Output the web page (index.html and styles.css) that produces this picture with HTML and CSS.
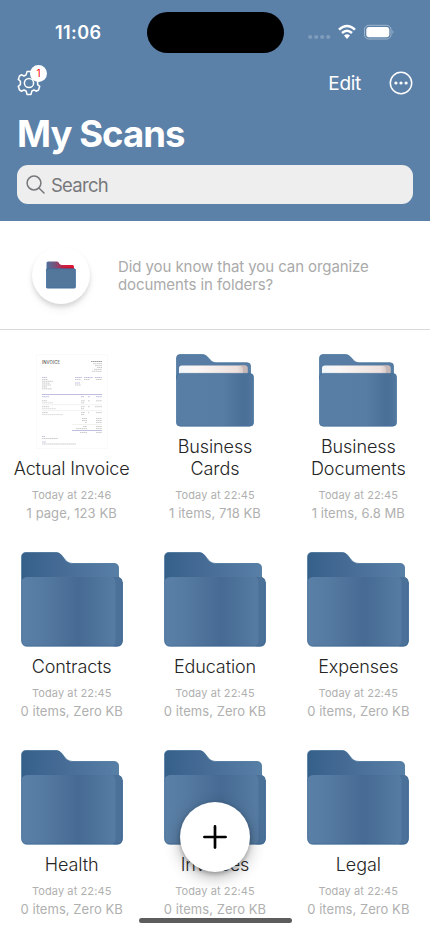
FILE: index.html
```html
<!DOCTYPE html>
<html lang="en">
<head>
<meta charset="utf-8">
<meta name="viewport" content="width=device-width">
<title>My Scans</title>
<link rel="stylesheet" href="styles.css">
</head>
<body>
<svg class="defs" width="0" height="0" aria-hidden="true">
  <defs>
    <linearGradient id="back" x1="0" x2="1"><stop offset="0" stop-color="#356089"/><stop offset=".35" stop-color="#446a94"/><stop offset="1" stop-color="#587fa6"/></linearGradient>
    <linearGradient id="front" x1="0" x2="1"><stop offset="0" stop-color="#5b80a7"/><stop offset=".2" stop-color="#567ba2"/><stop offset=".56" stop-color="#466a93"/><stop offset=".68" stop-color="#4b7098"/><stop offset=".9" stop-color="#567ba2"/></linearGradient>
    <linearGradient id="frontFull" x1="0" x2="1"><stop offset="0" stop-color="#597ea5"/><stop offset=".6" stop-color="#587da4"/><stop offset=".85" stop-color="#4b7098"/><stop offset=".92" stop-color="#4b7199"/><stop offset="1" stop-color="#5379a0"/></linearGradient>
    <linearGradient id="paper" x1="0" x2="1"><stop offset="0" stop-color="#f2f7fb"/><stop offset=".25" stop-color="#fbf7f5"/><stop offset=".85" stop-color="#eee1de"/><stop offset="1" stop-color="#c9bdbb"/></linearGradient>
    <linearGradient id="red" x1="0" x2="1"><stop offset="0" stop-color="#4c729b"/><stop offset=".3" stop-color="#76537c"/><stop offset=".6" stop-color="#c42249"/><stop offset="1" stop-color="#e8102e"/></linearGradient>
    <symbol id="folder" viewBox="0 0 102 95">
      <path fill="url(#back)" stroke="#356690" stroke-width=".7" d="M.6 30V5Q.6.5 5 .5H35C43 .5 42 11.5 52 11.5H93Q97.500 11.500 97.500 16V30Z"/>
      <rect x=".5" y="25" width="101" height="69.300" rx="5.500" fill="url(#front)"/>
      <path fill="#4b7199" d="M92 25H96Q101.500 25 101.500 30.500V89Q101.500 94.300 96 94.300H92Q94.500 92 94.500 88V31Q94.500 27 92 25Z"/>
      <path fill="none" stroke="#315f8d" stroke-width=".7" d="M.6 30V88Q.6 94.200 6 94.200H96Q101.300 94.200 101.300 88V30"/>
    </symbol>
    <symbol id="folder-full" viewBox="0 0 78 73">
      <path fill="#587da4" stroke="#3f6f9a" stroke-width=".7" d="M.5 25V4Q.5.5 4 .5H26C33 .5 33 8.700 40 8.700H71Q74.500 8.700 74.500 12V25Z"/>
      <path fill="url(#paper)" d="M3 21V14Q3 11.500 6 11.500H69Q71.500 11.500 71.500 14V21Z"/>
      <path fill="#c6b8b7" d="M63 11.500H69Q71.500 11.500 71.500 14V21H67V15Q67 12.500 63 11.500Z"/>
      <rect x=".4" y="19.400" width="77.200" height="52.800" rx="4" fill="url(#frontFull)" stroke="#3d6d99" stroke-width=".7"/>
    </symbol>
    <symbol id="folder-red" viewBox="0 0 30 28">
      <path fill="url(#red)" d="M.5 10V2Q.5.500 2 .500H11C13 .500 13 4 16 4H26.500Q28 4 28 6V10Z"/>
      <path fill="#b60f2b" d="M15 6H27V8H14Z" opacity=".4"/>
      <rect x=".4" y="7.800" width="29" height="19.300" rx="1" fill="#53779b" stroke="#3b699c" stroke-width=".8"/>
    </symbol>
  </defs>
</svg>

<div class="screen">
  <header class="header">
    <div class="status">
      <div class="clock">11:06</div>
      <div class="island"></div>
      <svg class="signals" width="88" height="18" viewBox="0 0 88 18">
        <g fill="#7f9cbc"><circle cx="2.200" cy="14" r="2.100"/><circle cx="8.200" cy="14" r="2.100"/><circle cx="14.200" cy="14" r="2.100"/><circle cx="20.200" cy="14" r="2.100"/></g>
        <g transform="translate(-1 1)">
          <g fill="none" stroke="#fff" stroke-width="2.500"><path d="M32 5.600Q40 -1.600 48 5.600"/><path d="M35 9Q40 4.400 45 9"/></g>
          <path fill="#fff" d="M37 11.600Q40 8.800 43 11.600L40 15Z"/>
          <rect x="57.500" y="1.300" width="26.500" height="13.700" rx="4.300" fill="none" stroke="#a1b6cc"/>
          <rect x="59.300" y="3" width="23" height="10.200" rx="2.900" fill="#fff"/>
          <path fill="#a1b6cc" d="M85.500 6Q87.500 8 85.500 10.200Z"/>
        </g>
      </svg>
    </div>
    <div class="toolbar">
      <div class="settings">
        <svg width="26" height="26" viewBox="0 0 26 26" fill="none" stroke="#fff" stroke-width="1.500" stroke-linejoin="round"><circle cx="13" cy="13" r="4.600"/><path d="M11 1.600H15L15.900 4.900L18.300 5.900L21.200 4.300L23.400 7.100V9.300L21.600 11.200V14.600L23.700 16.400L22.500 20L20.600 21.200L18 20L15.900 21L15 24.400H11L10.100 21L8 20L5.400 21.200L3.500 20L2.300 16.400L4.400 14.600V11.200L2.300 9.400L3.500 6L5.400 4.800L8 6L10.100 4.900Z"/></svg>
        <span class="badge">1</span>
      </div>
      <div class="actions">
        <span class="edit">Edit</span>
        <svg width="24" height="24" viewBox="0 0 24 24"><circle cx="12" cy="12" r="10.700" fill="none" stroke="#fff" stroke-width="1.500"/><g fill="#fff"><circle cx="6.900" cy="12" r="1.600"/><circle cx="12" cy="12" r="1.600"/><circle cx="17.100" cy="12" r="1.600"/></g></svg>
      </div>
    </div>
    <h1 class="title">My Scans</h1>
    <div class="search">
      <svg width="20" height="20" viewBox="0 0 20 20" fill="none" stroke="#77787c" stroke-width="1.500" stroke-linecap="round"><circle cx="8" cy="8" r="6.900"/><path d="M13.200 13.200 18 18"/></svg>
      <span class="placeholder">Search</span>
    </div>
  </header>

  <section class="tip">
    <div class="tip-icon"><svg width="30" height="28"><use href="#folder-red"/></svg></div>
    <p class="tip-text">Did you know that you can organize<br>documents in folders?</p>
  </section>

  <main class="grid">
    <article class="item">
      <svg class="invoice" width="72" height="95" viewBox="0 0 72 95">
        <rect x=".5" y=".5" width="71" height="94" fill="#fff" stroke="#fafafa"/>
        <text x="6" y="10.300" font-size="4.300" font-weight="400" fill="#333" textLength="18">INVOICE</text>
        <g fill="none" stroke="#b8b8b8" stroke-width=".7" stroke-dasharray="1.600 .3">
          <path stroke="#777" d="M55 7.500H66"/><path d="M57 9.700H66M59 11.600H66M61 13.500H66M58 15.400H66M56 17.300H66"/>
          <path d="M6 25.500H12M6 27.300H17M6 29.100H14M6 31H15M6 32.900H11M6 34.800H16"/>
          <path d="M39 25.500H45M48 25.500H54M60 25.500H66M39 31H45"/>
          <path d="M6 46.800H11M45 46.800H49M52 46.800H54M60 46.800H66M45 48.800H48M45 52.700H49M52 52.700H54M59 52.700H66M45 54.700H48M45 58.600H49M52 58.600H53M60 58.600H66M45 60.600H48M6 52.700H13M6 58.600H12"/>
          <path stroke-width=".5" d="M6 48.800H17M6 54.700H20M6 60.600H27"/>
          <path d="M46 64.500H51M60 64.500H66M46 66.500H51M60 66.500H66M49 68.500H51M60 68.500H66M47 72.500H51M60 72.500H66M40 74.600H51M60 74.600H66M44 78.500H51M60 78.500H66M6 84.500H22M6 90H40"/>
        </g>
        <g fill="none" stroke="#a3a5d3" stroke-width=".7">
          <path stroke-dasharray="1.500 .3" d="M6 23.500H11M39 23.500H46M48 23.500H57M59 23.500H66M39 29H44M6 42.700H13M45 42.700H48M52 42.700H54M60 42.700H66M6 82.500H9M6 88H10"/>
          <path d="M6 40.500H66M36 76.500H66"/>
          <path stroke="#ddd" stroke-width=".4" d="M6 50.700H66M6 56.600H66M36 70.500H66"/>
        </g>
      </svg>
      <h2 class="name">Actual Invoice</h2>
      <p class="date">Today at 22:46</p><p class="meta">1 page, 123 KB</p>
    </article>
    <article class="item">
      <svg class="full" width="78" height="73"><use href="#folder-full"/></svg>
      <h2 class="name">Business<br>Cards</h2>
      <p class="date">Today at 22:45</p><p class="meta">1 items, 718 KB</p>
    </article>
    <article class="item">
      <svg class="full" width="78" height="73"><use href="#folder-full"/></svg>
      <h2 class="name">Business<br>Documents</h2>
      <p class="date">Today at 22:45</p><p class="meta">1 items, 6.8 MB</p>
    </article>
    <article class="item">
      <svg class="empty" width="102" height="95"><use href="#folder"/></svg>
      <h2 class="name">Contracts</h2>
      <p class="date">Today at 22:45</p><p class="meta">0 items, Zero KB</p>
    </article>
    <article class="item">
      <svg class="empty" width="102" height="95"><use href="#folder"/></svg>
      <h2 class="name">Education</h2>
      <p class="date">Today at 22:45</p><p class="meta">0 items, Zero KB</p>
    </article>
    <article class="item">
      <svg class="empty" width="102" height="95"><use href="#folder"/></svg>
      <h2 class="name">Expenses</h2>
      <p class="date">Today at 22:45</p><p class="meta">0 items, Zero KB</p>
    </article>
    <article class="item">
      <svg class="empty" width="102" height="95"><use href="#folder"/></svg>
      <h2 class="name">Health</h2>
      <p class="date">Today at 22:45</p><p class="meta">0 items, Zero KB</p>
    </article>
    <article class="item">
      <svg class="empty" width="102" height="95"><use href="#folder"/></svg>
      <h2 class="name">Invoices</h2>
      <p class="date">Today at 22:45</p><p class="meta">0 items, Zero KB</p>
    </article>
    <article class="item">
      <svg class="empty" width="102" height="95"><use href="#folder"/></svg>
      <h2 class="name">Legal</h2>
      <p class="date">Today at 22:45</p><p class="meta">0 items, Zero KB</p>
    </article>
  </main>
  <div class="add"><svg width="24" height="24" viewBox="0 0 24 24" stroke="#000" stroke-width="2.700" stroke-linecap="round"><path d="M12 1.400V22.600M1.400 12H22.600"/></svg></div>
  <div class="home-bar"></div>
</div>
</body>
</html>
```

FILE: styles.css
```css
* { box-sizing: border-box; }
body { margin: 0; background: #fff; font-family: Inter, "Liberation Sans", sans-serif; }
h1, h2, p { margin: 0; }
svg { display: block; flex: none; }
.defs { position: absolute; }
.screen { position: relative; width: 430px; height: 932px; overflow: hidden; }

.header { height: 221px; background: #5c81a9; color: #fff; padding: 12px 17px 0; }
.status { height: 41px; display: grid; grid-template-columns: 130px 137px 129px; align-items: center; }
.clock { font-size: 18px; font-weight: 600; line-height: 20px; letter-spacing: 0.4px; padding-left: 38px; }
.island { width: 137px; height: 41px; border-radius: 21px; background: #000; }
.signals { margin: -2px 0 0 24px; }
.toolbar { height: 32px; margin-top: 14px; display: flex; align-items: center; justify-content: space-between; }
.settings { position: relative; margin-left: -1px; }
.badge { position: absolute; left: 14px; top: -5px; width: 17px; height: 17px; border-radius: 50%; background: #fff; color: #f00; font-size: 10px; line-height: 17px; text-align: center; }
.actions { display: flex; align-items: center; gap: 28px; }
.edit { font-size: 19px; line-height: 24px; letter-spacing: -0.3px; padding-top: 1px; }
.title { margin-top: 15px; font-size: 36.5px; line-height: 40px; font-weight: 700; letter-spacing: -0.95px; }
.search { margin: 11px 0 0; height: 39px; border-radius: 11px; background: #eee; display: flex; align-items: center; gap: 5px; padding-left: 9px; }
.placeholder { color: #77787c; font-size: 18.5px; line-height: 24px; letter-spacing: -0.75px; }

.tip { height: 109px; border-bottom: 1px solid #dadada; display: flex; align-items: center; padding-left: 32px; gap: 28px; }
.tip-icon { width: 58px; height: 58px; border-radius: 50%; background: #fff; display: flex; align-items: center; justify-content: center; box-shadow: 0 3px 4px rgba(0,0,0,.12), 0 6px 9px rgba(0,0,0,.05); }
.tip-text { color: #aaa; font-size: 15px; line-height: 18px; letter-spacing: -0.08px; padding-top: 2px; }

.grid { display: grid; grid-template-columns: repeat(3, 1fr); grid-auto-rows: 198px; margin-top: -5px; }
.item { display: flex; flex-direction: column; align-items: center; justify-content: flex-end; text-align: center; }
.name { color: #252525; font-size: 18px; font-weight: 300; line-height: 22px; letter-spacing: -0.1px; }
.date { color: #b0b0b0; font-size: 11px; line-height: 14px; letter-spacing: 0.1px; margin-top: 8px; }
.meta { color: #b0b0b0; font-size: 13px; line-height: 18px; letter-spacing: 0.05px; margin: 2px 0 1px; }
.invoice, .full, .empty { margin-bottom: 9px; }

.add { position: absolute; left: 180px; top: 802px; width: 70px; height: 70px; border-radius: 50%; background: #fff; display: flex; align-items: center; justify-content: center; box-shadow: 0 2px 4px rgba(0,0,0,.25), 0 5px 16px rgba(0,0,0,.3); }
.home-bar { position: absolute; left: 139px; top: 918px; width: 153px; height: 5px; border-radius: 3px; background: #5d5d5d; }
```
